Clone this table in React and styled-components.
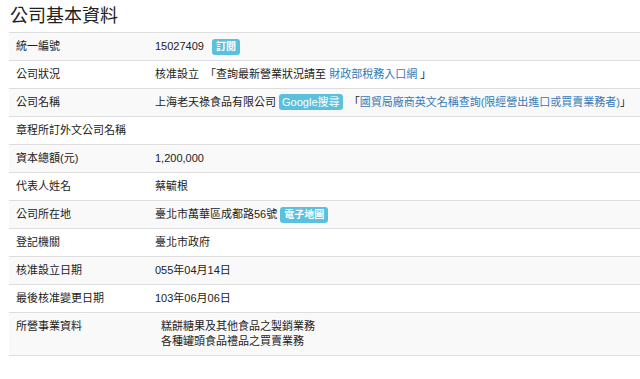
import React from "react";
import styled, { createGlobalStyle } from "styled-components";

const GlobalStyle = createGlobalStyle`
  body {
    margin: 0;
    background: #fff;
    font-family: "Liberation Sans", "Noto Sans CJK TC", sans-serif;
    color: #333;
  }
`;

const Page = styled.div`
  padding-left: 9px;
`;

const Title = styled.h3`
  margin: 3px 0 3px 1px;
  font-size: 18px;
  line-height: 26px;
  font-weight: normal;
  color: #222;
`;

const Table = styled.table`
  width: 100%;
  border-collapse: collapse;
  font-size: 11px;
  border-bottom: 1px solid #ddd;
`;

const Row = styled.tr`
  height: 28px;
  &:nth-child(odd) {
    background: #f9f9f9;
  }
`;

const Cell = styled.td`
  border-top: 1px solid #ddd;
  padding: 6px 7px;
  line-height: 15px;
  vertical-align: top;
  white-space: nowrap;
  color: #222;
`;

const Label = styled(Cell)`
  width: 125px;
`;

const Link = styled.a`
  color: #337ab7;
  text-decoration: none;
`;

const Badge = styled.span`
  display: inline-block;
  margin: -2px 0 -2px ${(p) => p.$gap || 0}px;
  padding: 2px 4px;
  font-size: 10px;
  font-weight: bold;
  line-height: 12px;
  color: #fff;
  background: #5bc0de;
  border-radius: 3px;
  vertical-align: 0;
`;

const BigBadge = styled(Badge)`
  font-size: 11px;
  font-weight: normal;
  padding: 1px 3px;
  line-height: 14px;
`;

const Lines = styled.div`
  padding-left: 6px;
`;

const App = () => (
  <Page>
    <GlobalStyle />
    <Title>公司基本資料</Title>
    <Table>
      <tbody>
        <Row>
          <Label>統一編號</Label>
          <Cell>
            15027409 <Badge $gap={5}>訂閱</Badge>
          </Cell>
        </Row>
        <Row>
          <Label>公司狀況</Label>
          <Cell>
            核准設立 &nbsp;「查詢最新營業狀況請至 <Link>財政部稅務入口網</Link> 」
          </Cell>
        </Row>
        <Row>
          <Label>公司名稱</Label>
          <Cell>
            上海老天祿食品有限公司 <BigBadge>Google搜尋</BigBadge> &nbsp;「
            <Link>國貿局廠商英文名稱查詢(限經營出進口或買賣業務者)</Link>」
          </Cell>
        </Row>
        <Row>
          <Label>章程所訂外文公司名稱</Label>
          <Cell></Cell>
        </Row>
        <Row>
          <Label>資本總額(元)</Label>
          <Cell>1,200,000</Cell>
        </Row>
        <Row>
          <Label>代表人姓名</Label>
          <Cell>蔡毓根</Cell>
        </Row>
        <Row>
          <Label>公司所在地</Label>
          <Cell>
            臺北市萬華區成都路56號 <Badge>電子地圖</Badge>
          </Cell>
        </Row>
        <Row>
          <Label>登記機關</Label>
          <Cell>臺北市政府</Cell>
        </Row>
        <Row>
          <Label>核准設立日期</Label>
          <Cell>055年04月14日</Cell>
        </Row>
        <Row>
          <Label>最後核准變更日期</Label>
          <Cell>103年06月06日</Cell>
        </Row>
        <Row>
          <Label>所營事業資料</Label>
          <Cell>
            <Lines>
              糕餅糖果及其他食品之製銷業務
              <br />
              各種罐頭食品禮品之買賣業務
            </Lines>
          </Cell>
        </Row>
      </tbody>
    </Table>
  </Page>
);

export default App;
